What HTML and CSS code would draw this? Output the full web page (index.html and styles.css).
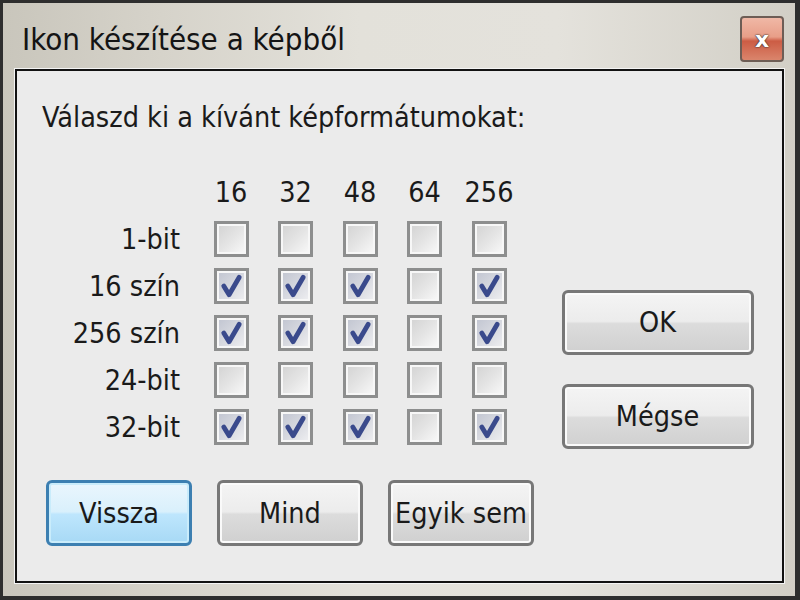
FILE: index.html
```html
<!DOCTYPE html>
<html lang="hu">
<head>
    <meta charset="UTF-8">
    <meta name="viewport" content="width=device-width, initial-scale=1.0">
    <title>Ikon készítése a képből</title>
    <link rel="stylesheet" href="styles.css">
</head>
<body>

  <div class="window">
    <header class="titlebar">
      <span class="title">Ikon készítése a képből</span>
      <button class="close">x</button>
    </header>

    <main class="client">
      <p class="prompt">Válaszd ki a kívánt képformátumokat:</p>

      <div class="middle">
        <div class="formats">
          <span></span>
          <span class="size">16</span>
          <span class="size">32</span>
          <span class="size">48</span>
          <span class="size">64</span>
          <span class="size">256</span>

          <span class="depth">1-bit</span>
          <span class="box"></span>
          <span class="box"></span>
          <span class="box"></span>
          <span class="box"></span>
          <span class="box"></span>

          <span class="depth">16 szín</span>
          <span class="box checked"></span>
          <span class="box checked"></span>
          <span class="box checked"></span>
          <span class="box"></span>
          <span class="box checked"></span>

          <span class="depth">256 szín</span>
          <span class="box checked"></span>
          <span class="box checked"></span>
          <span class="box checked"></span>
          <span class="box"></span>
          <span class="box checked"></span>

          <span class="depth">24-bit</span>
          <span class="box"></span>
          <span class="box"></span>
          <span class="box"></span>
          <span class="box"></span>
          <span class="box"></span>

          <span class="depth">32-bit</span>
          <span class="box checked"></span>
          <span class="box checked"></span>
          <span class="box checked"></span>
          <span class="box"></span>
          <span class="box checked"></span>
        </div>

        <div class="side">
          <button class="btn wide">OK</button>
          <button class="btn wide">Mégse</button>
        </div>
      </div>

      <div class="actions">
        <button class="btn focus">Vissza</button>
        <button class="btn">Mind</button>
        <button class="btn">Egyik sem</button>
      </div>
    </main>
  </div>

  <script>
    // put the check mark into every ticked box
    const tick = '<svg viewBox="0 0 30 30"><path d="M7 15 L12.5 24 L23 6" fill="none" stroke="#3a4a8c" stroke-width="5" stroke-linejoin="round" stroke-linecap="round"/></svg>';
    document.querySelectorAll('.box.checked').forEach(box => {
      box.innerHTML = tick;
    });
  </script>
</body>
</html>
```

FILE: styles.css
```css
* {
    margin: 0;
    padding: 0;
    box-sizing: border-box;
}
body {
    overflow: hidden;
    background: #1e1e1e;
    font-family: "Liberation Sans Narrow", "DejaVu Sans Condensed", "Liberation Sans", sans-serif;
    color: #1a1a1a;
}
.window {
    width: 800px;
    height: 600px;
    border-style: solid;
    border-color: #2e2e2e;
    border-width: 3px 5px 4px 3px;
    background: linear-gradient(90deg, #c9c6bc 0%, #d6d3ca 20%, #e3e1da 45%, #e4e2dc 70%, #d2cfc6 100%);
    display: flex;
    flex-direction: column;
    padding: 0 11px 13px 12px;
}
.titlebar {
    height: 66px;
    display: flex;
    align-items: center;
    justify-content: space-between;
    padding-left: 7px;
}
.title {
    font-size: 31px;
    color: #141414;
    padding-top: 6px;
}
.close {
    width: 44px;
    height: 46px;
    margin-top: 6px;
    border: 2px solid #6d5d55;
    border-radius: 4px;
    background: linear-gradient(180deg, #f0b8a6 0%, #e89e88 45%, #cc5c44 55%, #da856c 100%);
    color: white;
    font: bold 22px "DejaVu Sans", sans-serif;
    text-shadow: 0 0 2px #333, 0 0 1px #000;
    cursor: pointer;
}
.client {
    flex: 1;
    background: #ebebeb;
    border: 2px solid #121212;
    box-shadow: 0 0 0 1px #f4f4f4;
    padding: 29px 25px 0 25px;
    font-size: 28.5px;
}
.prompt {
    line-height: 36px;
    margin-bottom: 38px;
}
.middle {
    display: flex;
    gap: 55px;
}
.formats {
    display: grid;
    grid-template-columns: 142px repeat(5, 35px);
    grid-auto-rows: 36px;
    column-gap: 29.5px;
    row-gap: 11px;
    align-items: center;
}
.size {
    text-align: center;
    white-space: nowrap;
    justify-self: center;
}
.depth {
    text-align: right;
    padding-right: 4px;
    white-space: nowrap;
}
.box {
    width: 35px;
    height: 36px;
    border: 3px solid #8d8e8e;
    box-shadow: inset 0 0 0 2px #f7f7f7;
    background: linear-gradient(135deg, #d2d2d2 0%, #e4e4e4 50%, #fafafa 100%);
    display: flex;
}
.box.checked {
    background: linear-gradient(135deg, #c0c4d0 0%, #d6d8df 50%, #f0f0f2 100%);
}
.box svg {
    width: 100%;
    height: 100%;
}
.side {
    display: flex;
    flex-direction: column;
    gap: 29px;
    padding-top: 116px;
}
.btn {
    width: 146px;
    height: 66px;
    font: inherit;
    color: #1a1a1a;
    border: 3px solid #777;
    border-radius: 6px;
    background: linear-gradient(180deg, #f4f4f4 0%, #ececec 48%, #dcdcdc 52%, #d0d0d0 100%);
    box-shadow: inset 0 0 0 2px #fafafa;
    cursor: pointer;
}
.btn.wide {
    width: 192px;
    height: 65px;
}
.btn.focus {
    border-color: #3c7fb1;
    background: linear-gradient(180deg, #eaf6fd 0%, #d9f0fc 48%, #bee6fd 52%, #a7d9f5 100%);
    box-shadow: inset 0 0 0 2px #c9ecfb;
}
.actions {
    display: flex;
    gap: 25px;
    margin-top: 31px;
    padding-left: 4px;
}
```
